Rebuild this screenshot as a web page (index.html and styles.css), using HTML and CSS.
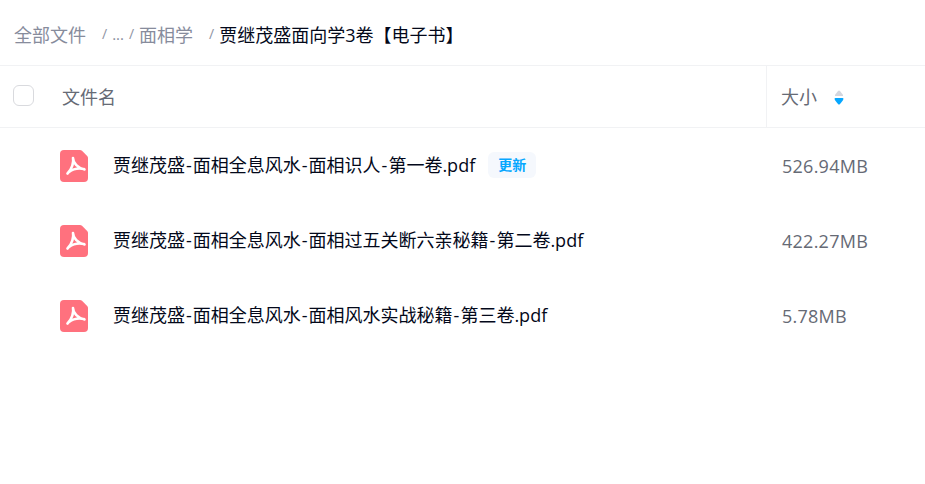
FILE: index.html
```html
<!DOCTYPE html>
<html lang="zh-CN">
<head>
    <meta charset="UTF-8">
    <meta name="viewport" content="width=device-width, initial-scale=1.0">
    <title>文件列表</title>
    <link rel="stylesheet" href="styles.css">
</head>
<body>
    <div class="breadcrumb">
        <span class="crumb">全部文件</span>
        <span class="sep sep-wide">/</span>
        <span class="crumb ellipsis">...</span>
        <span class="sep">/</span>
        <span class="crumb">面相学</span>
        <span class="sep sep-wide">/</span>
        <span class="current">贾继茂盛面向学3卷【电子书】</span>
    </div>

    <div class="table-head">
        <div class="col-name">
            <span class="checkbox"></span>
            <span class="head-label">文件名</span>
        </div>
        <div class="col-size">
            <span class="head-label">大小</span>
            <svg class="sort" width="10" height="16" viewBox="0 0 10 16">
                <path d="M1 7 L1 6 Q1.5 5 2.5 4 L4 2 Q5 1 6 2 L7.5 4 Q8.5 5 9 6 L9 7 Z" fill="#d3d6de"/>
                <path d="M0.500 10 Q0.500 9 1.500 9 L8.500 9 Q9.500 9 9.500 10 Q9 11 8 12.500 L6 15 Q5 16 4 15 L2 12.500 Q1 11 0.500 10 Z" fill="#06a7ff"/>
            </svg>
        </div>
    </div>

    <div class="row">
        <div class="col-name">
            <svg class="pdf-icon" width="28" height="32" viewBox="0 0 28 32">
                <path d="M4 0 H20 Q21 0 22 .8 L27.200 6 Q28 7 28 8 V28 Q28 32 24 32 H4 Q0 32 0 28 V4 Q0 0 4 0 Z" fill="#ff717e"/>
                <path d="M13 8 C14 12 12 19 7.500 23.500 M13 8 C13 13 18 18 24.500 19.500 M9 22 C13 19 19 18 24 19" fill="none" stroke="#fff" stroke-width="2.600" stroke-linecap="round"/>
            </svg>
            <span class="file-name">贾继茂盛<span class="dash">-</span>面相全息风水<span class="dash">-</span>面相识人<span class="dash">-</span>第一卷.pdf</span>
            <span class="tag">更新</span>
        </div>
        <div class="col-size size">526.94MB</div>
    </div>
    <div class="row">
        <div class="col-name">
            <svg class="pdf-icon" width="28" height="32" viewBox="0 0 28 32">
                <path d="M4 0 H20 Q21 0 22 .8 L27.200 6 Q28 7 28 8 V28 Q28 32 24 32 H4 Q0 32 0 28 V4 Q0 0 4 0 Z" fill="#ff717e"/>
                <path d="M13 8 C14 12 12 19 7.500 23.500 M13 8 C13 13 18 18 24.500 19.500 M9 22 C13 19 19 18 24 19" fill="none" stroke="#fff" stroke-width="2.600" stroke-linecap="round"/>
            </svg>
            <span class="file-name">贾继茂盛<span class="dash">-</span>面相全息风水<span class="dash">-</span>面相过五关断六亲秘籍<span class="dash">-</span>第二卷.pdf</span>
        </div>
        <div class="col-size size">422.27MB</div>
    </div>
    <div class="row">
        <div class="col-name">
            <svg class="pdf-icon" width="28" height="32" viewBox="0 0 28 32">
                <path d="M4 0 H20 Q21 0 22 .8 L27.200 6 Q28 7 28 8 V28 Q28 32 24 32 H4 Q0 32 0 28 V4 Q0 0 4 0 Z" fill="#ff717e"/>
                <path d="M13 8 C14 12 12 19 7.500 23.500 M13 8 C13 13 18 18 24.500 19.500 M9 22 C13 19 19 18 24 19" fill="none" stroke="#fff" stroke-width="2.600" stroke-linecap="round"/>
            </svg>
            <span class="file-name">贾继茂盛<span class="dash">-</span>面相全息风水<span class="dash">-</span>面相风水实战秘籍<span class="dash">-</span>第三卷.pdf</span>
        </div>
        <div class="col-size size">5.78MB</div>
    </div>
</body>
</html>
```

FILE: styles.css
```css
body {
    margin: 0;
    background-color: #fff;
    font-family: "Open Sans", "Noto Sans CJK SC", sans-serif;
    font-size: 18px;
    color: #03081a;
}

.breadcrumb {
    display: flex;
    align-items: center;
    height: 66px;
    padding: 2px 0 0 14px;
    box-sizing: border-box;
    border-bottom: 1px solid #f1f2f4;
    color: #878c9c;
}

.sep {
    margin: 0 5px;
    font-size: 14px;
    color: #8f94a3;
}

.sep-wide {
    margin-left: 16px;
}

.ellipsis {
    font-size: 15px;
}

.current {
    color: #03081a;
}

.table-head {
    display: flex;
    height: 62px;
    border-bottom: 1px solid #f1f2f4;
    box-sizing: border-box;
    color: #666a75;
}

.col-name {
    flex: 1;
    display: flex;
    align-items: center;
    min-width: 0;
}

.col-size {
    width: 159px;
    display: flex;
    align-items: center;
    padding-left: 16px;
    box-sizing: border-box;
}

.table-head .col-name {
    padding-left: 13px;
}

.table-head .col-size {
    border-left: 1px solid #f1f2f4;
    padding-left: 14px;
}

.head-label {
    margin-bottom: 2px;
}

.checkbox {
    width: 21px;
    height: 21px;
    border: 1px solid #d9dade;
    border-radius: 6px;
    box-sizing: border-box;
    margin-right: 28px;
    margin-bottom: 2px;
}

.sort {
    margin-left: 17px;
}

.row {
    display: flex;
    height: 75px;
}

.row .col-name {
    padding-left: 60px;
}

.pdf-icon {
    flex-shrink: 0;
    margin-right: 25px;
}

.file-name {
    white-space: nowrap;
    margin-bottom: 4px;
}

.dash {
    margin: 0 1px;
}

.tag {
    margin-left: 13px;
    margin-bottom: 1px;
    padding: 3px 10px;
    font-size: 14px;
    line-height: 20px;
    font-weight: 700;
    color: #06a7ff;
    background-color: #f5f8fd;
    border-radius: 6px;
}

.size {
    color: #666a75;
    letter-spacing: 0.25px;
}
```
